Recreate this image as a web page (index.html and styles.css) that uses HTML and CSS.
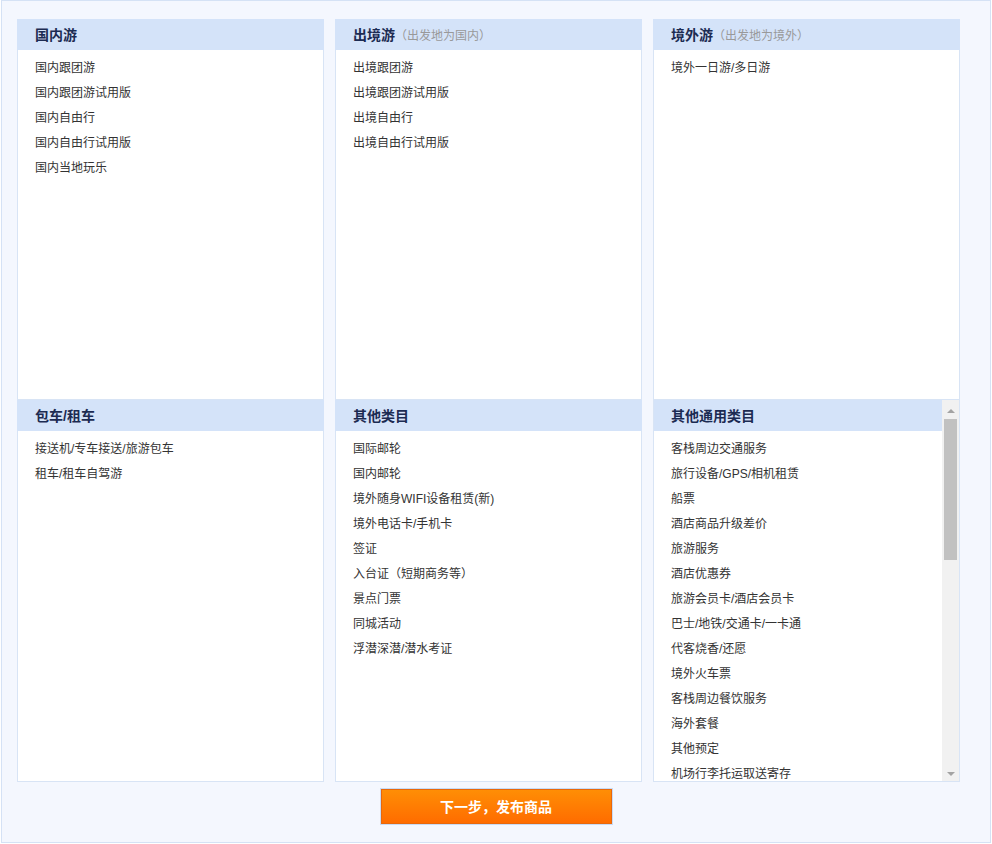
FILE: index.html
```html
<!DOCTYPE html>
<html lang="zh-CN">
<head>
<meta charset="utf-8">
<title>选择类目</title>
<link rel="stylesheet" href="styles.css">
</head>
<body>
<div class="page">
  <div class="grid">
    <div class="panel">
      <div class="panel-head">国内游</div>
      <ul class="list">
        <li>国内跟团游</li>
        <li>国内跟团游试用版</li>
        <li>国内自由行</li>
        <li>国内自由行试用版</li>
        <li>国内当地玩乐</li>
      </ul>
    </div>
    <div class="panel">
      <div class="panel-head">出境游<span class="sub">（出发地为国内）</span></div>
      <ul class="list">
        <li>出境跟团游</li>
        <li>出境跟团游试用版</li>
        <li>出境自由行</li>
        <li>出境自由行试用版</li>
      </ul>
    </div>
    <div class="panel">
      <div class="panel-head">境外游<span class="sub">（出发地为境外）</span></div>
      <ul class="list">
        <li>境外一日游/多日游</li>
      </ul>
    </div>
    <div class="panel">
      <div class="panel-head">包车/租车</div>
      <ul class="list">
        <li>接送机/专车接送/旅游包车</li>
        <li>租车/租车自驾游</li>
      </ul>
    </div>
    <div class="panel">
      <div class="panel-head">其他类目</div>
      <ul class="list">
        <li>国际邮轮</li>
        <li>国内邮轮</li>
        <li>境外随身WIFI设备租赁(新)</li>
        <li>境外电话卡/手机卡</li>
        <li>签证</li>
        <li>入台证（短期商务等）</li>
        <li>景点门票</li>
        <li>同城活动</li>
        <li>浮潜深潜/潜水考证</li>
      </ul>
    </div>
    <div class="panel panel-scroll">
      <div class="scroll-body">
        <div class="panel-head">其他通用类目</div>
        <ul class="list">
          <li>客栈周边交通服务</li>
          <li>旅行设备/GPS/相机租赁</li>
          <li>船票</li>
          <li>酒店商品升级差价</li>
          <li>旅游服务</li>
          <li>酒店优惠券</li>
          <li>旅游会员卡/酒店会员卡</li>
          <li>巴士/地铁/交通卡/一卡通</li>
          <li>代客烧香/还愿</li>
          <li>境外火车票</li>
          <li>客栈周边餐饮服务</li>
          <li>海外套餐</li>
          <li>其他预定</li>
          <li>机场行李托运取送寄存</li>
        </ul>
      </div>
      <div class="scrollbar" aria-hidden="true">
        <div class="sb-btn"><span class="arrow-up"></span></div>
        <div class="sb-track"><div class="sb-thumb"></div></div>
        <div class="sb-btn"><span class="arrow-down"></span></div>
      </div>
    </div>
  </div>
  <div class="actions">
    <button class="btn-next" type="button">下一步，发布商品</button>
  </div>
</div>
</body>
</html>
```

FILE: styles.css
```css
html, body {
  margin: 0;
  padding: 0;
  background: #ffffff;
}

body {
  font-family: "Liberation Sans", Arial, "Noto Sans CJK SC", sans-serif;
  font-size: 12px;
  color: #333333;
}

.page {
  box-sizing: border-box;
  margin-left: 1px;
  width: 990px;
  height: 843px;
  border: 1px solid #d5e2f5;
  background: #f4f7fe;
  padding-top: 18px;
}

.grid {
  display: grid;
  grid-template-columns: repeat(3, 307px);
  grid-template-rows: 381px 382px;
  column-gap: 11px;
  margin-left: 15px;
}

.panel {
  box-sizing: border-box;
  height: 100%;
  background: #ffffff;
  border: 1px solid #d8e4f5;
  border-top: 0;
}

.panel-head {
  height: 31px;
  line-height: 32px;
  margin: 0 -1px;
  padding-left: 18px;
  background: #d4e3f9;
  color: #1c2b52;
  font-size: 14px;
  font-weight: bold;
  white-space: nowrap;
}

.panel-head .sub {
  font-size: 12px;
  font-weight: normal;
  color: #999999;
}

.list {
  list-style: none;
  margin: 0;
  padding: 6px 0 0 17px;
}

.list li {
  height: 25px;
  line-height: 25px;
  white-space: nowrap;
}

.panel-scroll {
  display: flex;
  overflow: hidden;
}

.scroll-body {
  flex: 1;
  min-width: 0;
  overflow: hidden;
}

.panel-scroll .panel-head {
  margin-right: 0;
}

.scrollbar {
  width: 17px;
  flex: none;
  display: flex;
  flex-direction: column;
  background: #f1f1f1;
}

.sb-btn {
  height: 17px;
  flex: none;
  display: flex;
  align-items: center;
  justify-content: center;
}

.arrow-up {
  width: 0;
  height: 0;
  border-left: 4px solid transparent;
  border-right: 4px solid transparent;
  border-bottom: 4px solid #a3a3a3;
  margin-top: 4px;
}

.arrow-down {
  width: 0;
  height: 0;
  border-left: 4px solid transparent;
  border-right: 4px solid transparent;
  border-top: 4px solid #a3a3a3;
  margin-top: 2px;
}

.sb-track {
  flex: 1;
  padding: 2px 2px 0;
}

.sb-thumb {
  height: 141px;
  background: #c1c1c1;
}

.actions {
  display: flex;
  justify-content: center;
  margin-top: 7px;
}

.btn-next {
  box-sizing: border-box;
  width: 231px;
  height: 35px;
  margin: 0;
  padding: 0;
  border: 1px solid #e8680c;
  box-shadow: 0 0 0 1px #c8dbf5;
  background: linear-gradient(#ff8e05, #ff6c00);
  color: #ffffff;
  font-family: "Noto Sans CJK SC", sans-serif;
  font-size: 14px;
  font-weight: bold;
  line-height: 33px;
  cursor: pointer;
}
```
